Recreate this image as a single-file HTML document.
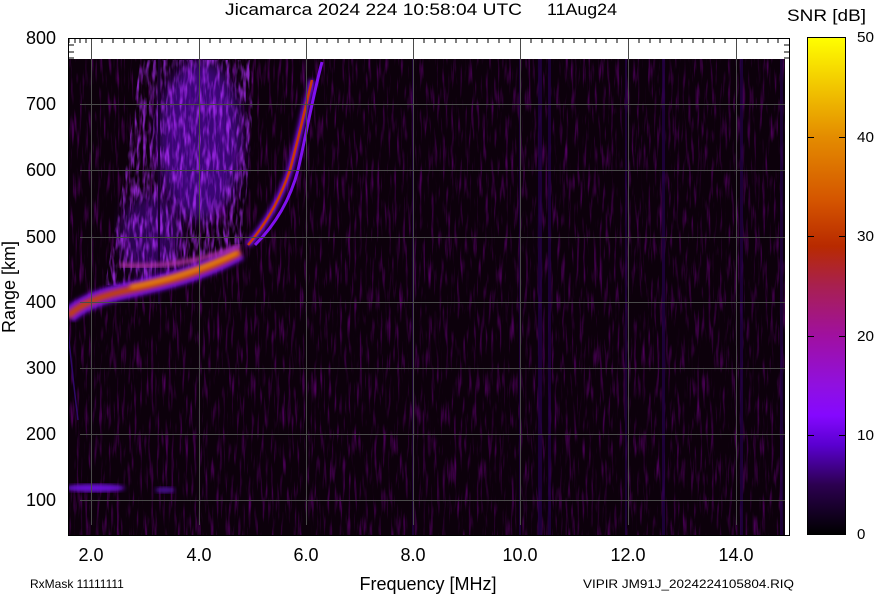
<!DOCTYPE html>
<html><head><meta charset="utf-8"><style>
html,body{margin:0;padding:0;background:#fff;width:874px;height:595px;overflow:hidden}
svg{display:block}
text{font-family:"Liberation Sans",sans-serif;fill:#000}
</style></head><body>
<svg width="874" height="595" viewBox="0 0 874 595" xmlns="http://www.w3.org/2000/svg">
<defs>
<linearGradient id="cb" x1="0" y1="0" x2="0" y2="1">
<stop offset="0" stop-color="#ffff00"/>
<stop offset="0.2" stop-color="#e48c00"/>
<stop offset="0.33" stop-color="#d45400"/>
<stop offset="0.42" stop-color="#b82a00"/>
<stop offset="0.5" stop-color="#a82050"/>
<stop offset="0.6" stop-color="#a010a0"/>
<stop offset="0.7" stop-color="#9010e0"/>
<stop offset="0.76" stop-color="#8508ff"/>
<stop offset="0.82" stop-color="#5a00d0"/>
<stop offset="0.9" stop-color="#2c0050"/>
<stop offset="1" stop-color="#000"/>
</linearGradient>
<filter id="noise" x="0" y="0" width="100%" height="100%">
<feTurbulence type="fractalNoise" baseFrequency="0.35 0.035" numOctaves="2" seed="4"/>
<feColorMatrix values="0 0 0 0 0.22  0 0 0 0 0  0 0 0 0 0.32  2.2 0 0 0 -1.15"/>
</filter>
<filter id="b2"><feGaussianBlur stdDeviation="2"/></filter>
<filter id="b6"><feGaussianBlur stdDeviation="7"/></filter>
<filter id="cloud" x="0" y="0" width="100%" height="100%">
<feTurbulence type="fractalNoise" baseFrequency="0.3 0.06" numOctaves="2" seed="9"/>
<feColorMatrix values="0 0 0 0 0.45  0 0 0 0 0.03  0 0 0 0 1  3 0 0 0 -1.3"/>
</filter>
<clipPath id="cl"><path d="M105,285 C112,240 125,190 140,60 L252,60 C255,120 248,170 242,250 L150,288 Z"/></clipPath>
<clipPath id="plot"><rect x="68" y="59" width="717" height="476"/></clipPath>
</defs>

<rect x="68" y="38" width="721" height="497" fill="#fff"/>
<rect x="68" y="59" width="717" height="476" fill="#0c000b"/>
<rect x="68" y="59" width="717" height="476" filter="url(#noise)" opacity="0.75"/>
<g clip-path="url(#plot)">
<g fill="#24004a" opacity="0.7">
<rect x="538" y="59" width="4" height="476"/><rect x="548" y="59" width="3" height="476"/>
<rect x="412" y="59" width="2" height="476"/><rect x="519" y="59" width="2" height="476"/>
<rect x="662" y="59" width="3" height="476"/><rect x="740" y="59" width="3" height="476"/>
<rect x="625" y="59" width="2" height="476"/><rect x="780" y="59" width="3" height="476"/>
</g>
<g>
<ellipse cx="200" cy="140" rx="42" ry="80" fill="#6a10e0" opacity="0.5" filter="url(#b6)"/>
<ellipse cx="150" cy="235" rx="30" ry="40" fill="#6a10e0" opacity="0.35" filter="url(#b6)"/>
<rect x="100" y="59" width="160" height="232" clip-path="url(#cl)" filter="url(#cloud)" opacity="0.75"/>
</g>
<rect x="158" y="59" width="2" height="245" fill="#1a0030"/>
<path d="M68,316 C80,305 95,298 120,292 C160,283 200,275 240,252" stroke="#7a10f0" stroke-width="16" fill="none" filter="url(#b2)"/>
<path d="M68,316 C80,305 95,298 120,292 C160,283 200,275 240,252" stroke="#c04010" stroke-width="7" fill="none" filter="url(#b2)"/>
<path d="M130,287 C170,280 205,268 238,252" stroke="#f09000" stroke-width="4" fill="none" filter="url(#b2)"/>
<path d="M120,265 C160,268 200,262 240,246" stroke="#b030a0" stroke-width="4" fill="none" filter="url(#b2)"/>
<path d="M248,245 C265,225 280,200 290,170 C298,140 305,110 312,80" stroke="#8010f0" stroke-width="6" fill="none" filter="url(#b2)"/>
<path d="M248,245 C265,225 280,200 290,170 C298,140 305,110 312,80" stroke="#c83808" stroke-width="2.5" fill="none"/>
<path d="M255,245 C275,225 290,200 298,170 C305,140 312,100 322,62" stroke="#8010f0" stroke-width="3" fill="none"/>
<ellipse cx="95" cy="488" rx="30" ry="4" fill="#6a10d8" filter="url(#b2)"/>
<ellipse cx="165" cy="490" rx="10" ry="3" fill="#4a0a98" filter="url(#b2)"/>
<path d="M78,420 C73,380 70,350 68,330" stroke="#30086a" stroke-width="1.5" fill="none"/>
</g>
<g stroke="#4a4a4a" stroke-width="1">
<path d="M91.5,38V525M199.5,38V525M306.5,38V525M413.5,38V525M520.5,38V525M628.5,38V525M736.5,38V525"/>
<path d="M80,104.5H785M80,170.5H785M80,237.5H785M80,302.5H785M80,368.5H785M80,434.5H785M80,500.5H785"/>
</g>
<g stroke="#000" stroke-width="1">
<path d="M69,38V43M75,38V43M80,38V43M86,38V43M102,38V43M113,38V43M124,38V43M134,38V43M145,38V43M156,38V43M167,38V43M177,38V43M188,38V43M210,38V43M220,38V43M231,38V43M242,38V43M252,38V43M263,38V43M274,38V43M285,38V43M295,38V43M317,38V43M327,38V43M338,38V43M349,38V43M360,38V43M370,38V43M381,38V43M392,38V43M402,38V43M424,38V43M435,38V43M445,38V43M456,38V43M467,38V43M477,38V43M488,38V43M499,38V43M510,38V43M531,38V43M542,38V43M553,38V43M563,38V43M574,38V43M585,38V43M596,38V43M606,38V43M617,38V43M639,38V43M650,38V43M660,38V43M671,38V43M682,38V43M693,38V43M703,38V43M714,38V43M725,38V43M747,38V43M757,38V43M768,38V43M778,38V43"/>
<path d="M69,45H74M69,52H74M69,58H74M784,45H789M784,52H789M784,58H789"/>
</g>
<rect x="68.5" y="38.5" width="721" height="497" fill="none" stroke="#000"/>
<g font-size="18" text-anchor="end">
<text x="56" y="44">800</text><text x="56" y="110">700</text><text x="56" y="176">600</text>
<text x="56" y="243">500</text><text x="56" y="308">400</text><text x="56" y="374">300</text>
<text x="56" y="440">200</text><text x="56" y="506">100</text>
</g>
<g font-size="18" text-anchor="middle">
<text x="91" y="561">2.0</text><text x="199" y="561">4.0</text><text x="306" y="561">6.0</text>
<text x="413" y="561">8.0</text><text x="520" y="561">10.0</text><text x="628" y="561">12.0</text><text x="736" y="561">14.0</text>
</g>
<text x="428" y="590" font-size="18" text-anchor="middle">Frequency [MHz]</text>
<text transform="translate(15,287) rotate(-90)" font-size="18" text-anchor="middle">Range [km]</text>
<text x="225" y="15" font-size="17" textLength="297" lengthAdjust="spacingAndGlyphs">Jicamarca 2024 224 10:58:04 UTC</text>
<text x="547" y="15" font-size="17" textLength="70" lengthAdjust="spacingAndGlyphs">11Aug24</text>
<text x="30" y="588" font-size="12">RxMask 11111111</text>
<text x="583" y="588" font-size="12" textLength="211" lengthAdjust="spacingAndGlyphs">VIPIR  JM91J_2024224105804.RIQ</text>
<rect x="807.5" y="37.5" width="38" height="497" fill="url(#cb)" stroke="#000"/>
<g stroke="#000"><path d="M808,137.5h6M839,137.5h6M808,236.5h6M839,236.5h6M808,336.5h6M839,336.5h6M808,435.5h6M839,435.5h6"/></g>
<text x="787" y="21" font-size="17" textLength="79" lengthAdjust="spacingAndGlyphs">SNR [dB]</text>
<g font-size="15">
<text x="857" y="42" textLength="17" lengthAdjust="spacingAndGlyphs">50</text><text x="857" y="142" textLength="17" lengthAdjust="spacingAndGlyphs">40</text><text x="857" y="241" textLength="17" lengthAdjust="spacingAndGlyphs">30</text>
<text x="857" y="341" textLength="17" lengthAdjust="spacingAndGlyphs">20</text><text x="857" y="440" textLength="17" lengthAdjust="spacingAndGlyphs">10</text><text x="857" y="539">0</text>
</g>
</svg>
</body></html>
